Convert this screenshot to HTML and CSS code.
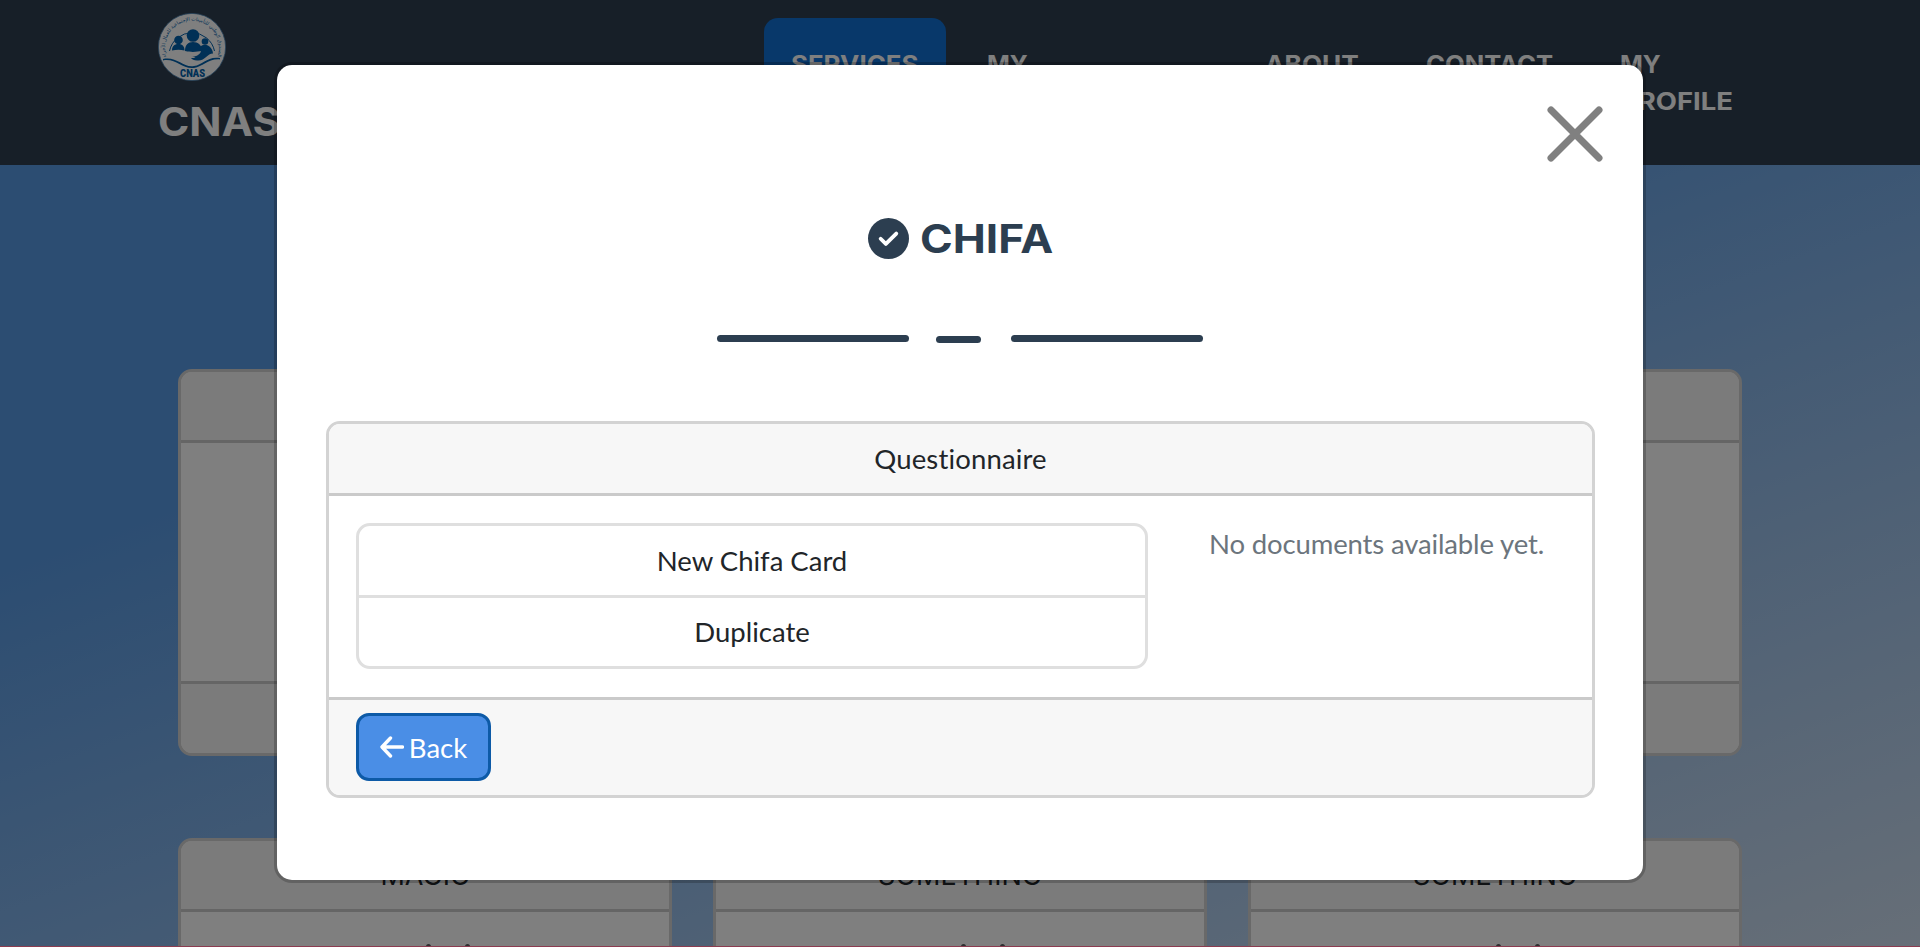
FILE: index.html
```html
<!DOCTYPE html>
<html lang="en">
<head>
<meta charset="utf-8">
<title>CNAS</title>
<link rel="stylesheet" href="styles.css">
</head>
<body>
<div class="page">
  <header class="navbar">
    <div class="brand">
      <svg class="brand-logo" viewBox="0 0 68 68">
        <defs><path id="arc" d="M8.500 43.500 A27 27 0 1 1 59.500 43.500"/></defs>
        <circle cx="34" cy="34" r="33.6" fill="#fff" stroke="#4d86b8" stroke-width=".8"/>
        <text class="logo-arc"><textPath href="#arc" startOffset="50%">الصندوق الوطني للتأمينات الإجتماعية للعمال الأجراء</textPath></text>
        <path d="M11.500 38 A23 23 0 0 1 56.500 38" fill="none" stroke="#0060ac" stroke-width="1"/>
        <g fill="#0060ac">
          <circle cx="35" cy="22.500" r="6.300"/>
          <circle cx="20.500" cy="27" r="4.300"/>
          <circle cx="47" cy="28.500" r="3.300"/>
          <path d="M27 38c0-6 3-9 8-9s9 3 9 9c-5 0-7 2-17 0z"/>
          <path d="M14 37.500c0-4 2-6.500 6.500-6.500 4 0 6 2.500 6 6.500-4-1-8-1-12.500 0z"/>
          <path d="M33 43c5 1 9-1 10-5l-1-4c2-2 5-3 8-1.500 3 1.500 5 5 5 8-6 0-8 8-16 7-3 0-5-1-6-2.500 2 0 4 0 4.500-1z"/>
          <path d="M5 46c14-3 20 9 31 7 9-1 13-10 26-8v1.400c-12-1-17 7.500-26 8.500-12 1.500-18-10-31-7.500z"/>
        </g>
        <text class="logo-name" x="34.500" y="64" textLength="25" lengthAdjust="spacingAndGlyphs">CNAS</text>
      </svg>
      <span class="brand-name"><span class="stretch brand-stretch">CNAS</span></span>
    </div>
    <nav class="nav">
      <a class="nav-link active"><span class="stretch">SERVICES</span></a>
      <a class="nav-link wide"><span class="stretch my-stretch">MY</span></a>
      <a class="nav-link about"><span class="stretch about-stretch">ABOUT</span></a>
      <a class="nav-link contact"><span class="stretch contact-stretch">CONTACT</span></a>
      <a class="nav-link profile"><span class="stretch my-stretch">MY</span><br><span class="stretch profile-stretch">PROFILE</span></a>
    </nav>
  </header>
  <main class="services-area">
    <div class="card-row">
      <article class="card"><div class="card-head"></div><div class="card-body"></div><div class="card-foot"></div></article>
      <article class="card"><div class="card-head"></div><div class="card-body"></div><div class="card-foot"></div></article>
      <article class="card"><div class="card-head"></div><div class="card-body"></div><div class="card-foot"></div></article>
    </div>
    <div class="card-row">
      <article class="card"><div class="card-head">MAGIC</div><div class="card-body dots"><i></i><i></i></div></article>
      <article class="card"><div class="card-head">SOMETHING</div><div class="card-body dots"><i></i><i></i></div></article>
      <article class="card"><div class="card-head">SOMETHING</div><div class="card-body dots"><i></i><i></i></div></article>
    </div>
  </main>
</div>
<div class="backdrop">
  <section class="modal">
    <div class="modal-top">
      <svg class="close" viewBox="0 0 56 56"><path d="M4 4 52 52M52 4 4 52"/></svg>
    </div>
    <h2 class="modal-title">
      <svg class="check" viewBox="0 0 512 512"><circle cx="256" cy="256" r="256" fill="#2c3e50"/><path d="M158 259l65 65 130-130" fill="none" stroke="#fff" stroke-width="48" stroke-linecap="round" stroke-linejoin="round"/></svg>
      <span class="title-text"><span class="stretch title-stretch">CHIFA</span></span>
    </h2>
    <div class="divider"><i class="line"></i><i class="dash"></i><i class="line"></i></div>
    <div class="form-card">
      <div class="form-head">Questionnaire</div>
      <div class="form-body">
        <ul class="choices"><li>New Chifa Card</li><li>Duplicate</li></ul>
        <p class="empty">No documents available yet.</p>
      </div>
      <div class="form-foot">
        <button class="back"><svg class="arrow" viewBox="0 0 24 22"><path d="M10.500 2 2 11l8.500 9M2.500 11H22.500"/></svg><span>Back</span></button>
      </div>
    </div>
  </section>
</div>
<div class="bottom-line"></div>
</body>
</html>
```

FILE: styles.css
```css
* { box-sizing: border-box; }
body {
  margin: 0;
  height: 947px;
  overflow: hidden;
  font: 27.5px/41px Lato, sans-serif;
  font-variant-ligatures: none;
  color: #212529;
}
.page { height: 947px; overflow: hidden; display: flex; flex-direction: column; }
.navbar {
  height: 165px;
  flex: none;
  background: #2e3e50;
  padding: 13px 158px 0;
  display: flex;
  justify-content: space-between;
  color: #fff;
  font-family: Inter, sans-serif;
  font-weight: 700;
}
.stretch { display: inline-block; transform: scaleX(1.055); transform-origin: left; }
.brand { display: flex; flex-direction: column; }
.brand-logo { width: 68px; height: 68px; display: block; }
.brand-name { font-size: 39px; line-height: 48px; margin-top: 17px; }
.brand-stretch { transform: scaleX(1.085); }
.logo-arc { font: 400 4.800px "DejaVu Sans", sans-serif; fill: #0060ac; text-anchor: middle; }
.logo-name { font: 900 10.500px Roboto, sans-serif; fill: #0060ac; text-anchor: middle; }
.nav { display: flex; align-items: flex-start; margin-top: 5px; margin-right: 28px; font-size: 24.5px; line-height: 37px; }
.nav-link { height: 129px; padding: 28px 0 0 27px; margin-right: 14px; width: 182px; }
.nav-link.active { background: #1170d4; border-radius: 14px; }
.nav-link.wide { width: 264px; }
.nav-link.about { width: 147px; }
.nav-link.contact { width: 180px; }
.nav-link.profile { width: 141px; margin-right: 0; }
.my-stretch { transform: scaleX(1); }
.about-stretch { transform: scaleX(1.07); }
.contact-stretch { transform: scaleX(1.045); }
.profile-stretch { transform: scaleX(1.12); }
.services-area {
  flex: 1;
  padding: 204px 178px 0;
  overflow: hidden;
  background: linear-gradient(160deg, #589ae4 375px, #cedef0 1392px);
}
.card-row { display: grid; grid-template-columns: repeat(3, 494px); gap: 41px; margin-bottom: 82px; }
.card { border: 3px solid #d3d3d3; border-radius: 14px; background: #fff; overflow: hidden; text-align: center; }
.card-head { height: 71px; background: #f7f7f7; border-bottom: 3px solid #cacaca; padding-top: 14px; font-family: Inter, sans-serif; font-size: 27px; }
.card-body { height: 238px; }
.card-body.dots { display: flex; justify-content: center; gap: 34px; padding: 32px 0 0 46px; }
.dots i { width: 5px; height: 5px; border-radius: 50%; background: #5b5e62; }
.card-foot { height: 72px; background: #f7f7f7; border-top: 3px solid #cacaca; }
.backdrop { position: absolute; inset: 0; background: rgba(0, 0, 0, .5); display: flex; justify-content: center; align-items: flex-start; padding-top: 62px; }
.modal {
  width: 1372px;
  height: 821px;
  border: 3px solid rgba(0, 0, 0, .2);
  border-radius: 18px;
  background: #fff;
  background-clip: padding-box;
  padding: 40.5px 48px 0 49px;
}
.modal-top { display: flex; justify-content: flex-end; height: 56.5px; margin-right: -7.5px; }
.close { width: 56px; height: 56px; fill: none; stroke: #808080; stroke-width: 7; stroke-linecap: round; }
.modal-title {
  margin: 52px 0 0;
  height: 49px;
  display: flex;
  align-items: center;
  justify-content: center;
  gap: 11px;
  color: #2c3e50;
  font: 700 39px/49px Inter, sans-serif;
}
.title-text { width: 133px; }
.title-stretch { transform: scaleX(1.135); }
.check { width: 41px; height: 41px; }
.divider { display: flex; justify-content: center; margin: 72px 1px 0 -1px; height: 8px; }
.line { width: 192px; height: 7px; border-radius: 3.500px; background: #2c3e50; }
.dash { width: 45px; height: 7px; border-radius: 3.500px; background: #2c3e50; margin: 1px 30px 0 27px; }
.form-card { margin-top: 78px; height: 377px; border: 3px solid #d3d3d3; border-radius: 14px; overflow: hidden; }
.form-head { height: 72px; background: #f7f7f7; border-bottom: 3px solid #cacaca; text-align: center; padding-top: 14px; letter-spacing: .15px; }
.form-body { height: 201px; padding: 27px; display: flex; }
.choices { list-style: none; margin: 0; padding: 0; width: 792px; height: 146px; border: 3px solid #dfdfdf; border-radius: 14px; text-align: center; }
.choices li { height: 69px; padding-top: 14px; }
.choices li + li { border-top: 3px solid #dfdfdf; height: 71px; padding-top: 13px; }
.empty { margin: 0 0 0 61px; color: #6c757d; white-space: nowrap; letter-spacing: -.14px; }
.form-foot { height: 98px; background: #f7f7f7; border-top: 3px solid #cacaca; padding: 13px 27px; }
.back {
  width: 135px;
  height: 68px;
  border: 3px solid #0d5aa7;
  border-radius: 13px;
  background: #4a8ee6;
  color: #fff;
  font: inherit;
  padding: 0;
  display: flex;
  align-items: center;
  justify-content: center;
  gap: 5px;
}
.arrow { width: 24px; height: 22px; fill: none; stroke: #fff; stroke-width: 3.400; stroke-linecap: round; stroke-linejoin: round; }
.bottom-line { position: absolute; left: 0; right: 0; top: 946px; height: 1px; background: #8c3c50; }
```
